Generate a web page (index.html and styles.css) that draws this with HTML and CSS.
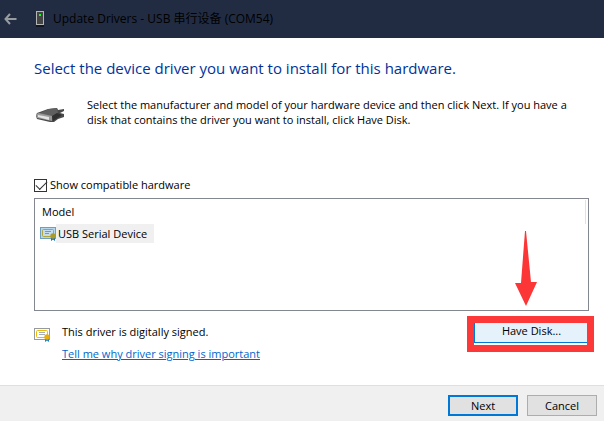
FILE: index.html
```html
<!DOCTYPE html>
<html lang="en">
<head>
<meta charset="utf-8">
<title>Update Drivers</title>
<link rel="stylesheet" href="styles.css">
</head>
<body>
<div class="wizard">
  <header class="titlebar">
    <button class="back" type="button" aria-label="Back">
      <svg width="13" height="12" viewBox="0 0 13 12"><path d="M6 1L1.5 6L6 11M2 6H12.500" fill="none" stroke="#989b9f" stroke-width="2"/></svg>
    </button>
    <svg class="device" width="8" height="16" viewBox="0 0 8 16">
      <rect x="0" y="14" width="8" height="2" fill="#111721"/>
      <rect x=".5" y=".5" width="7" height="13" fill="#454545" stroke="#b4b5b5"/>
      <rect x="3" y="3" width="2" height="2" fill="#13ff26"/>
    </svg>
    <span class="caption">Update Drivers - USB 串行设备 (COM54)</span>
  </header>

  <main class="content">
    <h1 class="heading">Select the device driver you want to install for this hardware.</h1>
    <div class="intro">
      <svg class="plug" width="30" height="16" viewBox="0 0 30 16">
        <path d="M0 8L1 5L12 1L21 0L22 2L28 1V3L24 5L28 6V9L22 11L18 14L14 14L1 11Z" fill="#4a4a4a"/>
        <path d="M4 5L13 1L21 0L22 5L16 9Z" fill="#5f5f5f"/>
        <path d="M0 6L3 5L16 8V13L1 10Z" fill="#999"/>
        <path d="M2 7L13 9V12L2 9Z" fill="#e4e4e4"/>
        <path d="M16 8L21 5L26 7L17 13Z" fill="#303030"/>
      </svg>
      <p class="text">Select the manufacturer and model of your hardware device and then click Next. If you have a disk that contains the driver you want to install, click Have Disk.</p>
    </div>

    <label class="compat"><input class="tick" type="checkbox" checked><span>Show compatible hardware</span></label>

    <div class="list">
      <div class="list-head">Model</div>
      <div class="row">
        <svg width="16" height="15" viewBox="0 0 16 15">
          <rect x=".5" y="1.500" width="15" height="11" fill="#b5d7ee" stroke="#6f9fbe"/>
          <rect x="2.500" y="3.500" width="11" height="7" rx="1" fill="#c4dced" stroke="#b1a43b"/>
          <path d="M5 5.500H11M5 7.500H9" stroke="#7898ad"/>
          <path d="M11 10H15V15L13 13.500L11 15Z" fill="#0872c8"/><circle cx="13" cy="10" r="2.700" fill="#aa9a29"/>
        </svg>
        <span class="row-name">USB Serial Device</span>
      </div>
    </div>

    <div class="lower">
      <svg class="cert" width="16" height="15" viewBox="0 0 16 15">
        <rect x=".5" y="1.500" width="15" height="11" fill="#fff" stroke="#969a9e"/>
        <rect x="2.500" y="3.500" width="11" height="7" rx="1" fill="#fff" stroke="#f0b90a"/>
        <path d="M5 5.500H11M5 7.500H11" stroke="#a5adb7"/>
        <path d="M11 10H15V15L13 13.500L11 15Z" fill="#1681d8"/><circle cx="13" cy="10" r="2.700" fill="#e8ae0b"/>
      </svg>
      <div class="signing">
        <p class="text">This driver is digitally signed.</p>
        <a class="link" href="#">Tell me why driver signing is important</a>
      </div>
      <div class="disk">
        <button class="have-disk" type="button">Have Disk...</button>
        <svg class="arrow" width="22" height="75" viewBox="0 0 22 75"><path d="M10 0H11L16 51L22 51L11 75L0 52H6Z" fill="#fc3636"/></svg>
        <span class="frame"></span>
      </div>
    </div>
  </main>

  <footer class="footer">
    <button class="btn primary" type="button">Next</button>
    <button class="btn" type="button">Cancel</button>
  </footer>
</div>
</body>
</html>
```
FILE: styles.css
```css
* { box-sizing: border-box; }
body {
  margin: 0;
  font: 11px/16px "Open Sans", "Noto Sans CJK SC", sans-serif;
  color: #000;
  background: #fff;
}
p, h1 { margin: 0; }
button { font: inherit; color: inherit; padding: 0; }
svg { display: block; flex: none; }

.wizard { display: flex; flex-direction: column; min-height: 100vh; }

.titlebar {
  display: flex;
  align-items: center;
  height: 38px;
  padding-left: 4px;
  background: #212c43;
}
.back { border: 0; background: none; }
.device { margin: 0 9px 0 19px; }
.caption { font-size: 12px; }

.content { flex: 1; padding: 19px 15px 0 34px; }
.heading {
  font-size: 15px;
  line-height: 22px;
  font-weight: 400;
  color: #003399;
}
.intro { display: flex; gap: 21px; margin-top: 18px; padding-left: 2px; }
.plug { margin-top: 11px; }
.text { line-height: 15px; }

.compat { display: flex; align-items: center; gap: 3px; margin-top: 50px; }
.tick {
  appearance: none;
  width: 13px;
  height: 13px;
  margin: 0;
  border: 1px solid #333;
  background: #fff;
}
.tick:checked::before {
  content: "";
  display: block;
  width: 10px;
  height: 5px;
  margin: 1px;
  border: solid #333;
  border-width: 0 0 1px 1px;
  transform: rotate(-45deg);
}

.list {
  height: 113px;
  margin-top: 5px;
  padding: 1px 2px;
  border: 1px solid #828790;
}
.list-head {
  height: 24px;
  padding-left: 5px;
  line-height: 24px;
  border-right: 1px solid #e0e3e4;
}
.row { display: flex; align-items: center; padding-left: 3px; }
.row-name { padding: 0 7px 0 2px; line-height: 19px; background: #f0f0f0; }

.lower { display: flex; align-items: flex-start; padding-top: 8px; }
.cert { margin-top: 8px; }
.signing { flex: 1; padding: 5px 0 0 12px; }
.link { display: inline-block; margin-top: 7px; color: #0066cc; }

.disk { position: relative; width: 115px; }
.have-disk {
  display: block;
  width: 100%;
  height: 24px;
  border: 1px solid #0078d7;
  background: #e5f1fb;
}
.frame {
  position: absolute;
  inset: -3px -5px -9px -7px;
  border: 7px solid #fc3838;
  pointer-events: none;
}
.arrow { position: absolute; left: 41px; bottom: 37px; }

.footer {
  display: flex;
  justify-content: flex-end;
  gap: 9px;
  height: 36px;
  padding: 9px 7px 0 0;
  border-top: 1px solid #dfdfdf;
  background: #f0f0f0;
}
.btn { width: 70px; height: 21px; border: 1px solid #adadad; background: #e1e1e1; }
.primary { border: 2px solid #0078d7; }
```
